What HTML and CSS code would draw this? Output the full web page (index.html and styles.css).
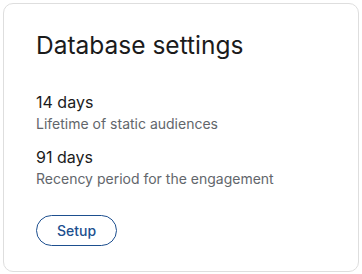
FILE: index.html
```html
<!DOCTYPE html>
<html lang="en">
<head>
    <meta charset="UTF-8">
    <meta name="viewport" content="width=device-width, initial-scale=1.0">
    <title>Database settings</title>
    <link rel="stylesheet" href="styles.css">
</head>
<body>
<div class="card">
    <!-- "Card title." -->
    <h1 class="card-title">Database settings</h1>

    <!-- "Settings list." -->
    <div class="setting">
        <div class="setting-value">14 days</div>
        <div class="setting-label">Lifetime of static audiences</div>
    </div>
    <div class="setting">
        <div class="setting-value">91 days</div>
        <div class="setting-label">Recency period for the engagement</div>
    </div>

    <button type="button" class="setup-btn">Setup</button>
</div>
</body>
</html>
```

FILE: styles.css
```css
/* "Global styles." */
body {
    font-family: Inter, "Noto Sans", Arial, sans-serif;
    background-color: #fff;
    margin: 0;
    padding: 3px;
}

/* "Card styles." */
.card {
    height: 269px;
    box-sizing: border-box;
    border: 1px solid #dedede;
    border-radius: 10px;
    padding: 27px 32px 26px;
    background-color: #fff;
}

.card-title {
    margin: 0 0 32px;
    font-size: 24.5px;
    line-height: 29px;
    font-weight: 400;
    color: #1b1b1b;
}

/* "Setting rows." */
.setting {
    margin-bottom: 14px;
}

.setting-value {
    font-size: 16px;
    line-height: 20px;
    color: #1b1b1b;
}

.setting-label {
    margin-top: 3px;
    font-size: 14px;
    line-height: 18px;
    color: #62666b;
}

/* "Setup button." */
.setup-btn {
    margin-top: 13px;
    width: 81px;
    height: 31px;
    padding: 0;
    font-family: inherit;
    font-size: 14px;
    font-weight: 500;
    color: #1d4f8f;
    background-color: #fff;
    border: 1px solid #1d4f8f;
    border-radius: 16px;
    cursor: pointer;
}
```
